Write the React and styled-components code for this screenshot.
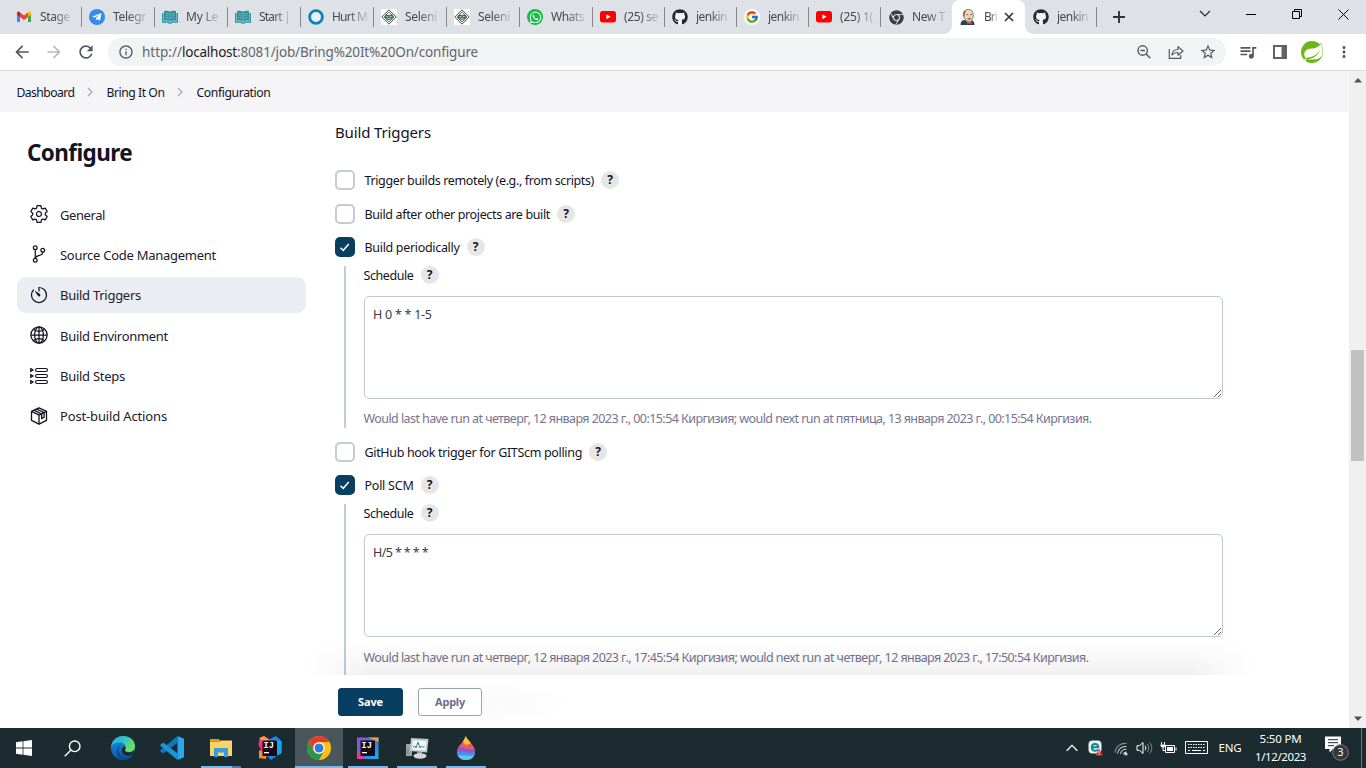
import React, { useLayoutEffect, useRef } from "react";
import styled, { createGlobalStyle, css } from "styled-components";
import { FcGoogle } from "react-icons/fc";
import { FaGithub, FaChrome, FaWhatsapp, FaTelegramPlane } from "react-icons/fa";
import { SiSpring } from "react-icons/si";
import {
  IoSettingsOutline,
  IoGitBranchOutline,
  IoTimerOutline,
  IoGlobeOutline,
} from "react-icons/io5";
import {
  MdArrowBack,
  MdArrowForward,
  MdRefresh,
  MdInfoOutline,
  MdStarBorder,
  MdMoreVert,
  MdQueueMusic,
} from "react-icons/md";

const Global = createGlobalStyle`
  *, *::before, *::after { box-sizing: border-box; }
  html, body { margin: 0; height: 768px; overflow: hidden; background: #fff; }
  body { font-family: "Segoe UI", "Noto Sans", "Open Sans", sans-serif; font-size: 12.5px; color: #14141f; }
  svg { display: block; flex: none; }
`;

/* ---------- text that keeps a fixed measure ---------- */

const Measure = styled.span`
  display: inline-block;
  white-space: pre;
  flex: none;
  text-align: left;
`;

function Text({ width, children }) {
  const ref = useRef(null);
  useLayoutEffect(() => {
    const el = ref.current;
    el.style.width = "auto";
    el.style.letterSpacing = "0px";
    const natural = el.getBoundingClientRect().width;
    el.style.letterSpacing = `${(width - natural) / children.length}px`;
    el.style.width = `${width}px`;
  }, [width, children]);
  return <Measure ref={ref}>{children}</Measure>;
}

/* ---------- window ---------- */

const Window = styled.div`
  width: 1366px;
  height: 768px;
  display: flex;
  flex-direction: column;
  overflow: hidden;
`;

const TabStrip = styled.div`
  height: 34px;
  flex: none;
  display: flex;
  background: #dee1e6;
  padding-left: 8px;
`;

const Tab = styled.div`
  position: relative;
  width: ${(p) => p.$w}px;
  height: 34px;
  flex: none;
  display: flex;
  align-items: center;
  gap: 8px;
  padding-left: 8px;
  color: #45494d;
  font-size: 12px;
  ${(p) =>
    p.$line &&
    css`
      &::after {
        content: "";
        position: absolute;
        right: -1px;
        top: 7px;
        width: 1px;
        height: 20px;
        background: #83868b;
      }
    `}
  ${(p) =>
    p.$active &&
    css`
      background: #fff;
      border-radius: 8px 8px 0 0;
      &::before,
      &::after {
        content: "";
        position: absolute;
        bottom: 0;
        width: 8px;
        height: 8px;
      }
      &::before {
        left: -8px;
        background: radial-gradient(circle at 0 0, transparent 7.5px, #fff 8px);
      }
      &::after {
        right: -8px;
        background: radial-gradient(circle at 100% 0, transparent 7.5px, #fff 8px);
      }
    `}
`;

const TabTitle = styled.span`
  flex: none;
  line-height: 18px;
  mask-image: linear-gradient(to right, #000 45%, rgba(0, 0, 0, 0.2) 100%);
`;

const CloseTab = styled.svg`
  margin-left: -1px;
`;

const Favicon = styled.span`
  width: 16px;
  height: 16px;
  flex: none;
  display: grid;
  place-items: center;
  color: #24292f;
  border-radius: ${(p) => (p.$disc ? "50%" : "0")};
  background: ${(p) => p.$bg || "transparent"};
`;

const NewTab = styled.div`
  width: 46px;
  display: grid;
  place-items: center;
`;

const Controls = styled.div`
  margin-left: auto;
  display: flex;
  height: 28px;
`;

const Control = styled.div`
  width: 46px;
  display: grid;
  place-items: center;
`;

const Toolbar = styled.div`
  height: 37px;
  flex: none;
  display: flex;
  align-items: center;
  padding: 0 6px;
  background: #fff;
  border-bottom: 1px solid #d8d9dc;
`;

const ToolButton = styled.div`
  width: 32px;
  height: 28px;
  flex: none;
  display: grid;
  place-items: center;
  color: ${(p) => (p.$off ? "#b9bbbe" : "#55595e")};
`;

const Omnibox = styled.div`
  width: 1118px;
  height: 28px;
  margin: 0 6px;
  border-radius: 14px;
  background: #f1f3f4;
  display: flex;
  align-items: center;
  padding: 0 2px 0 10px;
`;

const Url = styled.div`
  flex: 1;
  padding-left: 8px;
  font-size: 13.5px;
  line-height: 26px;
  color: #62666b;
  display: flex;
`;

const Host = styled.span`
  display: flex;
  color: #1c1d20;
`;

/* ---------- page ---------- */

const Viewport = styled.div`
  flex: 1;
  min-height: 0;
  display: flex;
`;

const Page = styled.div`
  width: 1349px;
  display: flex;
  flex-direction: column;
`;

const Breadcrumbs = styled.nav`
  height: 41px;
  flex: none;
  display: flex;
  align-items: center;
  padding: 2px 0 0 16.5px;
  background: #f5f5f8;
  font-size: 12.2px;
`;

const Crumb = styled.svg`
  margin: -2px 12.500px 0 11.500px;
`;

const Columns = styled.div`
  flex: 1;
  min-height: 0;
  display: flex;
`;

const Sidebar = styled.aside`
  width: 335px;
  flex: none;
  padding: 23px 29px 0 17px;
`;

const Heading = styled.h1`
  margin: 0 0 25.500px 10px;
  font-size: 22.500px;
  font-weight: 700;
  line-height: 36px;
`;

const SideList = styled.div`
  display: flex;
  flex-direction: column;
  gap: 4.400px;
`;

const SideItem = styled.div`
  height: 36px;
  display: flex;
  align-items: center;
  gap: 11px;
  padding-left: 12px;
  border-radius: 9px;
  font-size: 13px;
  color: #20202c;
  background: ${(p) => (p.$active ? "#ecedf3" : "transparent")};
`;

const IconSlot = styled.span`
  width: 20px;
  margin-top: -1px;
  display: grid;
  place-items: center;
  color: #14141f;
`;

const Main = styled.main`
  flex: 1;
  min-width: 0;
  display: flex;
  flex-direction: column;
`;

const Form = styled.div`
  position: relative;
  height: 563px;
  flex: none;
  margin-left: -30px;
  padding-left: 30px;
  overflow: hidden;
`;

const SectionTitle = styled.div`
  height: 40px;
  line-height: 41px;
  font-size: 15px;
`;

const Option = styled.div`
  height: 20px;
  margin-top: ${(p) => p.$gap}px;
  display: flex;
  align-items: center;
  gap: 9.500px;
`;

const Box = styled.span`
  width: 20px;
  height: 20px;
  flex: none;
  border-radius: 5px;
  border: 2px solid ${(p) => (p.$on ? "#083e60" : "#c3ccd1")};
  background: ${(p) => (p.$on ? "#083e60" : "#fff")};
  display: grid;
  place-items: center;
`;

const Caption = styled.span`
  display: flex;
  align-items: center;
  gap: 7px;
  line-height: 18px;
`;

const CaptionText = styled.span`
  display: flex;
  height: 18px;
  padding-top: 1px;
`;

const Help = styled.span`
  width: 18px;
  height: 18px;
  border-radius: 50%;
  background: #e6e6e6;
  font-size: 12px;
  font-weight: 700;
  line-height: 18px;
  text-align: center;
`;

const Nested = styled.div`
  height: ${(p) => p.$tall ? 180 : 162}px;
  margin: 9px 0 0 9px;
  padding-left: 17.500px;
  border-left: 2px solid #c3ccd1;
`;

const Area = styled.textarea`
  display: block;
  width: 859px;
  height: 103px;
  margin: 12px 0 0 0.500px;
  padding: 8px;
  border: 1px solid #bccbd0;
  border-radius: 5px;
  outline: none;
  background: #fff;
  color: #3a3a44;
  font-family: inherit;
  font-size: 12.500px;
  line-height: 19px;
  letter-spacing: ${(p) => p.$track}px;
`;

const Hint = styled.div`
  padding-top: ${(p) => p.$drop}px;
  line-height: 19px;
  color: #77738f;
`;

const FadeShadow = styled.div`
  position: absolute;
  left: 0;
  bottom: 0;
  width: 950px;
  height: 34px;
  background: linear-gradient(to bottom, rgba(0, 0, 0, 0), rgba(0, 0, 0, 0.055));
  mask-image: linear-gradient(to right, transparent, #000 60px, #000 890px, transparent);
`;

const Actions = styled.div`
  flex: 1;
  display: flex;
  gap: 15px;
  padding: 13px 0 0 3px;
  background: radial-gradient(ellipse 110px 22px at 130px 28px, #f9f9f9, #fdfdfd 75%, #fff);
`;

const Button = styled.button`
  width: ${(p) => (p.$primary ? 65 : 64)}px;
  height: 28px;
  padding: 0 0 1px;
  border: 1px solid ${(p) => (p.$primary ? "#083e60" : "#96a5b2")};
  border-radius: 3px;
  background: ${(p) => (p.$primary ? "#083e60" : "#fff")};
  color: ${(p) => (p.$primary ? "#fff" : "#706c8a")};
  font-family: inherit;
  font-size: 11px;
  font-weight: 700;
`;

const Scrollbar = styled.div`
  width: 17px;
  flex: none;
  display: flex;
  flex-direction: column;
  align-items: center;
  justify-content: space-between;
  padding: 7px 0;
  background: #f0f0f0;
`;

const Thumb = styled.div`
  width: 13px;
  height: 111px;
  margin-top: 74px;
  margin-bottom: 62px;
  background: #c1c1c1;
`;

/* ---------- taskbar ---------- */

const Taskbar = styled.div`
  height: 40px;
  flex: none;
  display: flex;
  background: #1b2b30;
  color: #fff;
`;

const TaskButton = styled.div`
  position: relative;
  width: 48px;
  margin-right: ${(p) => p.$gap || 0}px;
  display: grid;
  place-items: center;
  background: ${(p) => (p.$active ? "#49565b" : "transparent")};
  ${(p) =>
    p.$run &&
    css`
      &::after {
        content: "";
        position: absolute;
        bottom: 0;
        left: ${p.$active ? 0 : 4}px;
        right: ${p.$active ? 0 : 4}px;
        height: 2px;
        background: ${p.$stack
          ? "linear-gradient(to right, #76b9ed 31px, #4f7f9f 31px)"
          : "#76b9ed"};
      }
    `}
`;

const Tray = styled.div`
  margin-left: auto;
  display: flex;
`;

const TrayItem = styled.div`
  width: ${(p) => p.$w}px;
  display: flex;
  flex-direction: column;
  align-items: center;
  justify-content: center;
  font-size: 11.500px;
  line-height: 18px;
`;

const Peek = styled.div`
  width: 5px;
  border-left: 1px solid #68767b;
`;

/* ---------- drawings ---------- */

const Gmail = () => (
  <svg width="16" height="16" viewBox="0 0 16 16">
    <path d="M1 4v8.2c0 .6.4.9.9.9H4V6z" fill="#4285f4" />
    <path d="M15 4v8.2c0 .6-.4.9-.9.9H12V6z" fill="#34a853" />
    <path d="M12 3.6V8l3-2.3V4c0-1.3-1.4-2-2.3-1.2z" fill="#fbbc04" />
    <path d="M4 3.6V8L1 5.7V4c0-1.3 1.4-2 2.3-1.2z" fill="#c5221f" />
    <path d="M4 8V3.4l4 3 4-3V8l-4 3z" fill="#ea4335" />
  </svg>
);

const Book = () => (
  <svg width="16" height="14" viewBox="0 0 16 14">
    <path d="M.6 3v9.200h5.700l.7.900h2l.7-.900h5.700V3" fill="#8cc6cc" stroke="#36939f" strokeWidth="1.200" />
    <path d="M2 1.200C4 .6 6 .7 8 1.800c2-1.100 4-1.200 6-.6v9.300c-2-.5-4-.4-6 .6-2-1-4-1.100-6-.6z" fill="#2e8f9b" />
    <path d="M8 2.600v7.500M3.500 3.400l3 .4M3.500 5.600l3 .4M3.500 7.800l3 .4M12.500 3.400l-3 .4M12.500 5.600l-3 .4M12.500 7.800l-3 .4" stroke="#8ccbd1" strokeWidth=".7" />
  </svg>
);

const Ring = () => (
  <svg width="16" height="16" viewBox="0 0 16 16">
    <circle cx="8" cy="8" r="6.4" fill="#e8f1f7" stroke="#0b84bd" strokeWidth="2.8" />
  </svg>
);

const Selenium = () => (
  <svg width="16" height="16" viewBox="0 0 16 16" fill="none">
    <path d="M8 .8 15.2 8 8 15.2.8 8z" stroke="#474b48" />
    <path d="M8 3 13 8l-5 5-5-5z" stroke="#6b716d" />
    <path d="M4.500 6h3L8 7l.8-1h2.700v3L9 10.500H7L4.500 9z" fill="#3f7d54" stroke="#2f4f3b" strokeWidth=".6" />
    <path d="M5.500 7.500h1.600M9 7.500h1.600M6.500 9.300h3" stroke="#d5e8da" strokeWidth=".8" />
  </svg>
);

const Youtube = () => (
  <svg width="16" height="12" viewBox="0 0 16 12">
    <rect width="16" height="11.4" rx="2.6" fill="#f00" />
    <path d="M6.4 3.2v5l4.2-2.5z" fill="#fff" />
  </svg>
);

const Jenkins = () => (
  <svg width="16" height="16" viewBox="0 0 16 16">
    <path d="M.5 16c0-3 1.500-4.600 3.500-5h7c2.200.6 3.400 2 3.600 5z" fill="#25415c" />
    <path d="M5 11l4 4 3.500-4.500z" fill="#f3f3f3" />
    <path d="M3.400 5C3.600 2 5.600.5 8.300.5c3 0 4.900 1.900 5 5.400.1 3.600-1.900 6.500-4.400 6.500-2.700 0-5.400-3.200-5.500-7.400z" fill="#efd6b9" stroke="#5b4a41" strokeWidth=".7" />
    <path d="M3.300 8C2.200 5 3 1.600 6.500.7 5.200 2.500 5.200 4.500 4.700 7z" fill="#8b7667" />
    <path d="M6.600 5.700h1.600M10.200 5.700h1.600M7.600 9.600c1 .6 2.200.5 3.200 0" stroke="#4c3b32" strokeWidth=".8" />
    <path d="M9.300 6.800l.8 1.200" stroke="#b98a68" strokeWidth=".8" />
    <path d="M7 12.400l2.600 1 2.700-1.300v3.500l-2.700-1.200L7 15.600z" fill="#d33833" />
  </svg>
);

const ZoomOut = () => (
  <svg width="16" height="16" viewBox="0 0 16 16" fill="none" stroke="currentColor" strokeWidth="1.400">
    <circle cx="6.700" cy="6.500" r="4.700" />
    <path d="M4.500 6.500h4.400M10.100 9.900l4.300 4.300" />
  </svg>
);

const Share = () => (
  <svg width="16" height="16" viewBox="0 0 16 16" fill="none" stroke="currentColor" strokeWidth="1.200">
    <path d="M1.300 5v9.300h11.400V11" />
    <path d="M4 11c.3-3.600 2.400-5.400 6-5.500V2.600L15 7l-5 4.200V8.500c-2.700 0-4.600.7-6 2.500z" strokeLinejoin="round" />
  </svg>
);

const SidePanel = () => (
  <svg width="14" height="14" viewBox="0 0 14 14">
    <path d="M1 1h12v12H1z" fill="none" stroke="#5f6368" strokeWidth="2" />
    <path d="M8.500 1H13v12H8.500z" fill="#5f6368" />
  </svg>
);

const Steps = () => (
  <svg width="18" height="18" viewBox="0 0 18 18" fill="none" stroke="currentColor" strokeWidth="1.200">
    {[3, 9, 15].map((y) => (
      <g key={y}>
        <path d={`M.7 ${y - 1.5}v3l2.400-1.500z`} strokeLinejoin="round" />
        <rect x="5.600" y={y - 1.5} width="11.800" height="3" rx="1.500" />
      </g>
    ))}
  </svg>
);

const Parcel = () => (
  <svg width="18" height="18" viewBox="0 0 18 18" fill="none" stroke="currentColor" strokeWidth="1.300" strokeLinejoin="round">
    <path d="M9 .8l7.500 3.600v8.900L9 17.200l-7.500-3.900V4.400z" />
    <path d="M1.500 4.400L9 8.200l7.500-3.800M9 8.200v9M4 3.200l7.700 3.900M6.500 2l7.600 3.700M11.700 7v4.600l2.400-1.300V5.700" />
  </svg>
);

const Check = () => (
  <svg width="12" height="12" viewBox="0 0 12 12" fill="none" stroke="#fff" strokeWidth="1.500">
    <path d="M1.500 6.700l2.700 2.600 5.600-6.400" />
  </svg>
);

const Edge = () => (
  <svg width="26" height="26" viewBox="0 0 26 26">
    <defs>
      <linearGradient id="edgeTop" x1="0" y1="0" x2="1" y2=".5">
        <stop offset="0" stopColor="#2aa5dd" />
        <stop offset=".5" stopColor="#2fc2c9" />
        <stop offset="1" stopColor="#70e05a" />
      </linearGradient>
      <linearGradient id="edgeSide" x1="0" y1="0" x2="0" y2="1">
        <stop offset="0" stopColor="#1490df" />
        <stop offset="1" stopColor="#0f59a8" />
      </linearGradient>
    </defs>
    <circle cx="13" cy="13" r="12" fill="url(#edgeSide)" />
    <path d="M1 12C1.800 5 7 1 13 1c7 0 12 4.800 12 10.200 0 3.800-3 6-6.200 6-2.600 0-4.200-.9-4.200-1.800 0-.7 1.200-1.200 1.200-3 0-2.800-2.600-4.900-6.400-4.900C5.600 7.500 2.300 9.200 1 12z" fill="url(#edgeTop)" />
    <path d="M10.500 10.500c-3 2.500-2.300 8.500 2.500 10.800 3.200 1.500 7 .7 9.800-1-2.400 3.400-6.600 5.100-10.800 4.600C6 23.500 4.500 14 10.500 10.500z" fill="#0c4a94" />
    <path d="M14.900 15c.6 2.800 6.400 3.300 9.300-.3-.2 2.100-.7 3.600-1.600 5-4.500 2.500-10.800 1.100-11-4.200 0-2 1.200-3.900 2.700-4.200 1.200.7 1.600 2 .6 3.700z" fill="#1b2b30" />
  </svg>
);

const Code = () => (
  <svg width="24" height="24" viewBox="0 0 24 24">
    <path d="M17.500 0L24 2.800v18.400L17.500 24z" fill="#2aa8ef" />
    <path d="M17.500 0v6.800L3.200 17.600.3 15.300v-1.100z" fill="#0f78bd" />
    <path d="M17.500 24v-6.800L3.200 6.400.3 8.700v1.100z" fill="#1c93dc" />
  </svg>
);

const Folder = () => (
  <svg width="22" height="20" viewBox="0 0 22 20">
    <path d="M0 1h9l1.500 2H22v4H0z" fill="#dd9b10" />
    <path d="M0 4h9.500L11 2.500h11V18H0z" fill="#fbd366" />
    <path d="M4 11.500c0-1 .6-1.500 1.500-1.500h11c.9 0 1.500.5 1.500 1.500V19h-4v-4.500H8V19H4z" fill="#3a9be0" />
  </svg>
);

const IjText = styled.text`
  font: 700 8.5px "Liberation Mono", monospace;
  fill: #fff;
`;

const Idea = ({ framed }) => (
  <svg width="24" height="24" viewBox="0 0 24 24">
    <defs>
      <linearGradient id="ideaFrame" x1="0" y1="0" x2="1" y2="1">
        <stop offset="0" stopColor="#b14cbd" />
        <stop offset=".45" stopColor="#3b6ff0" />
        <stop offset="1" stopColor="#14b6ef" />
      </linearGradient>
    </defs>
    {framed ? (
      <>
        <path d="M1 1.500h21.500V23H1z" fill="url(#ideaFrame)" />
        <path d="M12 1.500h10.500V6z" fill="#f39a42" />
        <path d="M1 12v11h8z" fill="#e63c8f" />
      </>
    ) : (
      <>
        <path d="M1.500 2L6 0l7 4-4 16-8 2.500L3 14 .5 9z" fill="#f5317f" />
        <path d="M1 14l8 3-1 6-7-1z" fill="#ff8a2a" />
        <path d="M12 3l6-3 5.500 5v12L17 21l-4 3-4-4z" fill="#1688ee" />
        <path d="M19 3l4.500 3v11l-6 3.500z" fill="#12a6ee" />
        <path d="M1.500 2L6 0l5 4-6 2z" fill="#fe9a43" />
      </>
    )}
    <path d="M4.500 4.500H19V20H4.500z" fill="#160a14" />
    <IjText x="5.600" y="12">IJ</IjText>
    <path d="M6 16h5v1.300H6z" fill="#fff" />
  </svg>
);

const ChromeColor = () => (
  <svg width="24" height="24" viewBox="0 0 24 24">
    <circle cx="12" cy="12" r="12" fill="#fbc116" />
    <path d="M1.600 6A12 12 0 0 1 22.400 6H12a6 6 0 0 0-5.200 9z" fill="#e33b2e" />
    <path d="M1.600 6A12 12 0 0 0 12 24l5.200-9A6 6 0 0 1 6.800 15z" fill="#279847" />
    <circle cx="12" cy="12" r="5.700" fill="#fff" />
    <circle cx="12" cy="12" r="4.500" fill="#3577e5" />
  </svg>
);

const Monitor = () => (
  <svg width="24" height="24" viewBox="0 0 24 24">
    <path d="M1 8h6v12H1z" fill="#9ca3a5" />
    <path d="M2 13h1.500v5H2z" fill="#55a93f" />
    <path d="M6 2l17.500 1L22 16.500 5 15z" fill="#c9cbc9" />
    <path d="M8 4.300l13.500.9-1.200 9.300L7 13.500z" fill="#f5f8f8" />
    <path d="M8 11l2-1 1 2 2-6 2 6 1.500-2 1 1 2-.3" fill="none" stroke="#3183ae" />
    <path d="M12 16h5v3h-5z" fill="#999" />
    <ellipse cx="15" cy="20" rx="6.500" ry="2.700" fill="#d8d9d7" />
  </svg>
);

const Drop = () => (
  <svg width="20" height="26" viewBox="0 0 20 26">
    <defs>
      <clipPath id="dropShape">
        <path d="M9.500 1c2.500 5 9.500 9.500 9.500 15.500 0 5-4 8.500-9 8.500s-9-3.500-9-8.500C1 11 8.500 7 9.500 1z" />
      </clipPath>
    </defs>
    <g clipPath="url(#dropShape)">
      <path d="M0 0h20v26H0z" fill="#ee596a" />
      <path d="M8 0h5l3 8-6 2-3-3z" fill="#fec232" />
      <path d="M0 13c5-4 10 4 20 0v13H0z" fill="#9159c4" />
      <path d="M0 18c6-5 11 3 20-2v10H0z" fill="#4c8dea" />
      <path d="M0 21c6-3 11 2 20-1v6H0z" fill="#57c9ed" />
    </g>
  </svg>
);

const Eset = () => (
  <svg width="16" height="16" viewBox="0 0 16 16">
    <rect x=".5" y=".5" width="13" height="13" rx="4" fill="#e4f3f3" />
    <path d="M4 7.200h6.200C10 2.700 3.800 3 3.800 7.300c0 3.700 4 4.300 6 2.300" fill="none" stroke="#16868e" strokeWidth="2" />
    <path d="M11 8.500l4 7H7.500z" fill="#e3342b" />
    <path d="M11 11v2.200M11 14v.8" stroke="#fff" />
  </svg>
);

const Wifi = () => (
  <svg width="14" height="15" viewBox="0 0 14 15" fill="none" stroke="#d5dadb" strokeWidth="1.100">
    <path d="M1 11.500C1.500 6 6.500 1.700 12.500 2.500" stroke="#849094" />
    <path d="M3.500 12.500C4 8 8 5 12.500 5.500M6.500 13c.5-3 3-5 6-4.700M9.500 13.500c.3-1.500 1.500-2.500 3-2.300" />
    <circle cx="12" cy="13" r="1" fill="#fff" />
  </svg>
);

const Sound = () => (
  <svg width="17" height="14" viewBox="0 0 17 14" fill="none" stroke="#fff">
    <path d="M1 4.700h2.500L7 1.500v11L3.500 9.300H1z" />
    <path d="M9 4.700c1 1.300 1 3.300 0 4.600" />
    <path d="M11.300 3c2 2.400 2 5.600 0 8M13.500 1.300c3 3.400 3 8 0 11.400" stroke="#7d8b90" />
  </svg>
);

const Battery = () => (
  <svg width="17" height="12" viewBox="0 0 17 12" fill="none" stroke="#fff">
    <path d="M5.500 3.500h9v7h-9zM16 5.500v3" />
    <path d="M7 5h6v4H7z" fill="#fff" stroke="none" />
    <path d="M1.500 0v2.500M4.500 0v2.500M3 5v3.500h2.500" />
    <path d="M.5 2.500h5V4L4 5.500H2L.5 4z" fill="#fff" stroke="none" />
  </svg>
);

const Keyboard = () => (
  <svg width="23" height="14" viewBox="0 0 23 14" fill="none" stroke="#fff">
    <path d="M.5.5h22v12H.5z" />
    <path d="M3 3.500h17M3 6.500h17" strokeDasharray="1.500 1" />
    <path d="M3 9.500h2M7 9.500h9M18 9.500h2" />
  </svg>
);

const CountText = styled.text`
  font: 10.5px "Noto Sans", sans-serif;
  fill: #fff;
  text-anchor: middle;
`;

const Notifications = () => (
  <svg width="26" height="28" viewBox="0 0 26 28">
    <path d="M1 2.500h16V15H9l-3.500 3.500V15H1z" fill="#fff" />
    <path d="M4 5.700h10M4 8.700h10M4 11.700h6" stroke="#1b2b30" />
    <circle cx="16.500" cy="18.500" r="7.800" fill="#33373b" stroke="#7c8385" />
    <CountText x="16.500" y="22.300">3</CountText>
  </svg>
);

/* ---------- data ---------- */

const gh = <Favicon $disc $bg="#f4f5f6"><FaGithub size={16} /></Favicon>;
const yt = <Favicon><Youtube /></Favicon>;
const se = <Favicon $bg="#fff"><Selenium /></Favicon>;
const bk = <Favicon><Book /></Favicon>;

const tabs = [
  [<Favicon><Gmail /></Favicon>, "Stage", 73, 30],
  [<Favicon $disc $bg="#2f8df0"><FaTelegramPlane size={10} color="#fff" /></Favicon>, "Telegr", 73, 33],
  [bk, "My Le", 73, 32],
  [bk, "Start |", 73, 31],
  [<Favicon><Ring /></Favicon>, "Hurt M", 73, 35],
  [se, "Seleni", 73, 32],
  [se, "Seleni", 73, 32],
  [<Favicon $disc $bg="#12c143"><FaWhatsapp size={13} color="#fff" /></Favicon>, "Whats", 73, 33],
  [yt, "(25) se", 72, 34],
  [gh, "jenkin", 72, 31],
  [<Favicon $disc $bg="#fff"><FcGoogle size={14} /></Favicon>, "jenkin", 72, 31],
  [yt, "(25) 1(", 72, 33],
  [<Favicon><FaChrome size={15} color="#3c4043" /></Favicon>, "New T", 72, 33],
];

const sections = [
  [<IoSettingsOutline size={20} />, "General", 45],
  [<IoGitBranchOutline size={20} />, "Source Code Management", 156],
  [<IoTimerOutline size={20} />, "Build Triggers", 81],
  [<IoGlobeOutline size={20} />, "Build Environment", 108],
  [<Steps />, "Build Steps", 65],
  [<Parcel />, "Post-build Actions", 107],
];

function Labelled({ label, width }) {
  return (
    <Caption>
      <CaptionText><Text width={width}>{label}</Text></CaptionText>
      <Help>?</Help>
    </Caption>
  );
}

function Choice({ on, gap, label, width }) {
  return (
    <Option $gap={gap}>
      <Box $on={on}>{on && <Check />}</Box>
      <Labelled label={label} width={width} />
    </Option>
  );
}

function Schedule({ value, track, hint, width, tall }) {
  return (
    <Nested $tall={tall}>
      <Labelled label="Schedule" width={50} />
      <Area defaultValue={value} $track={track} spellCheck={false} />
      <Hint $drop={tall ? 11 : 10}>
        <Text width={width}>{hint}</Text>
      </Hint>
    </Nested>
  );
}

const Separator = () => (
  <Crumb width="8" height="10" viewBox="0 0 8 10" fill="none" stroke="#a9a9b8" strokeWidth="1.300">
    <path d="M2 1l4 4-4 4" />
  </Crumb>
);

export default function App() {
  return (
    <Window>
      <Global />
      <TabStrip>
        {tabs.map(([icon, title, w, textWidth], i) => (
          <Tab key={i} $w={w} $line={i < 12}>
            {icon}
            <TabTitle><Text width={textWidth}>{title}</Text></TabTitle>
          </Tab>
        ))}
        <Tab $w={73} $active>
          <Favicon><Jenkins /></Favicon>
          <TabTitle><Text width={13}>Bri</Text></TabTitle>
          <CloseTab width="10" height="10" viewBox="0 0 10 10" stroke="#35383c" strokeWidth="1.700">
            <path d="M1 1l8 8M9 1L1 9" />
          </CloseTab>
        </Tab>
        <Tab $w={71} $line>
          {gh}
          <TabTitle><Text width={31}>jenkin</Text></TabTitle>
        </Tab>
        <NewTab>
          <svg width="12" height="12" viewBox="0 0 12 12" stroke="#303438" strokeWidth="1.900">
            <path d="M6 0v12M0 6h12" />
          </svg>
        </NewTab>
        <Controls>
          <Control>
            <svg width="12" height="8" viewBox="0 0 12 8" fill="none" stroke="#222" strokeWidth="1.100">
              <path d="M1 1l5 5 5-5" />
            </svg>
          </Control>
          <Control>
            <svg width="10" height="2" viewBox="0 0 10 2"><path d="M0 1h10v1H0z" /></svg>
          </Control>
          <Control>
            <svg width="10" height="10" viewBox="0 0 10 10" fill="none" stroke="#000">
              <path d="M.5 2.500h7v7h-7zM2.500 2.500v-2h7v7h-2" />
            </svg>
          </Control>
          <Control>
            <svg width="11" height="11" viewBox="0 0 11 11" stroke="#000">
              <path d="M.5.5l10 10M10.500.5l-10 10" />
            </svg>
          </Control>
        </Controls>
      </TabStrip>

      <Toolbar>
        <ToolButton><MdArrowBack size={20} /></ToolButton>
        <ToolButton $off><MdArrowForward size={20} /></ToolButton>
        <ToolButton><MdRefresh size={20} /></ToolButton>
        <Omnibox>
          <MdInfoOutline size={16} color="#55595e" />
          <Url>
            <Text width={40}>http://</Text>
            <Host><Text width={55}>localhost</Text></Host>
            <Text width={241}>:8081/job/Bring%20It%20On/configure</Text>
          </Url>
          <ToolButton><ZoomOut /></ToolButton>
          <ToolButton><Share /></ToolButton>
          <ToolButton><MdStarBorder size={18} /></ToolButton>
        </Omnibox>
        <ToolButton><MdQueueMusic size={20} /></ToolButton>
        <ToolButton><SidePanel /></ToolButton>
        <ToolButton><SiSpring size={22} color="#6db51b" /></ToolButton>
        <ToolButton><MdMoreVert size={18} /></ToolButton>
      </Toolbar>

      <Viewport>
        <Page>
          <Breadcrumbs>
            <Text width={58}>Dashboard</Text>
            <Separator />
            <Text width={58}>Bring It On</Text>
            <Separator />
            <Text width={74}>Configuration</Text>
          </Breadcrumbs>
          <Columns>
            <Sidebar>
              <Heading><Text width={105}>Configure</Text></Heading>
              <SideList>
                {sections.map(([icon, label, w], i) => (
                  <SideItem key={label} $active={i === 2}>
                    <IconSlot>{icon}</IconSlot>
                    <Text width={w}>{label}</Text>
                  </SideItem>
                ))}
              </SideList>
            </Sidebar>
            <Main>
              <Form>
                <SectionTitle><Text width={96}>Build Triggers</Text></SectionTitle>
                <Choice gap={18} label="Trigger builds remotely (e.g., from scripts)" width={229.5} />
                <Choice gap={14} label="Build after other projects are built" width={185.5} />
                <Choice gap={13} on label="Build periodically" width={95} />
                <Schedule
                  value="H 0 * * 1-5"
                  track={-0.25}
                  hint="Would last have run at четверг, 12 января 2023 г., 00:15:54 Киргизия; would next run at пятница, 13 января 2023 г., 00:15:54 Киргизия."
                  width={728}
                />
                <Choice gap={14} label="GitHub hook trigger for GITScm polling" width={217.5} />
                <Choice gap={13} on label="Poll SCM" width={49} />
                <Schedule
                  tall
                  value="H/5 * * * *"
                  track={-0.6}
                  hint="Would last have run at четверг, 12 января 2023 г., 17:45:54 Киргизия; would next run at четверг, 12 января 2023 г., 17:50:54 Киргизия."
                  width={725}
                />
                <FadeShadow />
              </Form>
              <Actions>
                <Button $primary><Text width={25}>Save</Text></Button>
                <Button><Text width={30}>Apply</Text></Button>
              </Actions>
            </Main>
          </Columns>
        </Page>
        <Scrollbar>
          <svg width="8" height="5" viewBox="0 0 8 5" fill="#505050"><path d="M4 0l4 4.500H0z" /></svg>
          <Thumb />
          <svg width="8" height="5" viewBox="0 0 8 5" fill="#505050"><path d="M4 5l4-4.500H0z" /></svg>
        </Scrollbar>
      </Viewport>

      <Taskbar>
        <TaskButton>
          <svg width="16" height="16" viewBox="0 0 16 16" fill="#fff">
            <path d="M0 2.200L6.600 1.300v6.300H0zM7.400 1.200L16 0v7.600H7.400zM0 8.400h6.600v6.300L0 13.800zM7.400 8.400H16V16l-8.600-1.200z" />
          </svg>
        </TaskButton>
        <TaskButton $gap={3}>
          <svg width="17" height="17" viewBox="0 0 17 17" fill="none" stroke="#fff" strokeWidth="1.400">
            <circle cx="10.700" cy="6.300" r="5.300" />
            <path d="M6.800 10.200L.7 16.300" />
          </svg>
        </TaskButton>
        <TaskButton $gap={1}><Edge /></TaskButton>
        <TaskButton $gap={1}><Code /></TaskButton>
        <TaskButton $gap={1} $run $stack><Folder /></TaskButton>
        <TaskButton $gap={1}><Idea /></TaskButton>
        <TaskButton $gap={1} $run $active><ChromeColor /></TaskButton>
        <TaskButton $gap={1} $run><Idea framed /></TaskButton>
        <TaskButton $gap={1} $run><Monitor /></TaskButton>
        <TaskButton $run><Drop /></TaskButton>
        <Tray>
          <TrayItem $w={22}>
            <svg width="12" height="8" viewBox="0 0 12 8" fill="none" stroke="#fff" strokeWidth="1.300">
              <path d="M.7 6.700L6 1.400l5.300 5.300" />
            </svg>
          </TrayItem>
          <TrayItem $w={25}><Eset /></TrayItem>
          <TrayItem $w={25}><Wifi /></TrayItem>
          <TrayItem $w={22}><Sound /></TrayItem>
          <TrayItem $w={27}><Battery /></TrayItem>
          <TrayItem $w={29}><Keyboard /></TrayItem>
          <TrayItem $w={38}><Text width={23}>ENG</Text></TrayItem>
          <TrayItem $w={63}>
            <Text width={42}>5:50 PM</Text>
            <Text width={51}>1/12/2023</Text>
          </TrayItem>
          <TrayItem $w={49}><Notifications /></TrayItem>
          <Peek />
        </Tray>
      </Taskbar>
    </Window>
  );
}
